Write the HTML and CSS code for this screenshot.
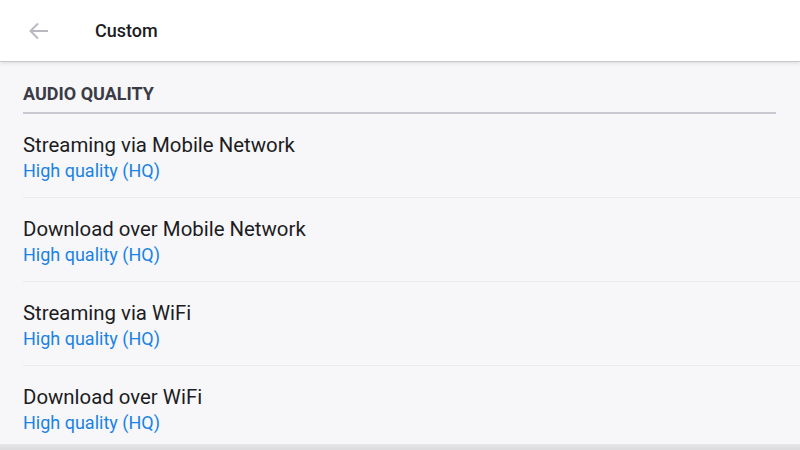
FILE: index.html
```html
<!DOCTYPE html>
<html>
<head>
    <title>Custom</title>
    <meta name="viewport" content="width=device-width, initial-scale=1">
    <link rel="stylesheet" href="styles.css">
</head>
<body>
    <header class="topbar">
        <span class="back">
            <svg width="24" height="24" viewBox="0 0 24 24"><path d="M21 12H3.5M11 4.5L3.5 12l7.5 7.5" fill="none" stroke="#b9b9c4" stroke-width="2"/></svg>
        </span>
        <span class="title">Custom</span>
    </header>

    <main class="settings">
        <h2 class="group">AUDIO QUALITY</h2>
        <ul class="list">
            <li>
                <div class="name">Streaming via Mobile Network</div>
                <div class="value">High quality (HQ)</div>
            </li>
            <li>
                <div class="name">Download over Mobile Network</div>
                <div class="value">High quality (HQ)</div>
            </li>
            <li>
                <div class="name">Streaming via WiFi</div>
                <div class="value">High quality (HQ)</div>
            </li>
            <li>
                <div class="name">Download over WiFi</div>
                <div class="value">High quality (HQ)</div>
            </li>
        </ul>
    </main>
    <div class="bottom"></div>
</body>
</html>
```

FILE: styles.css
```css
body { font-family: Roboto, 'Noto Sans', sans-serif; margin: 0; background: #f7f7f9; height: 450px; overflow: hidden; display: flex; flex-direction: column; }
.topbar { height: 61px; background: #fff; display: flex; align-items: center; border-bottom: 1px solid #c9c9cc; box-shadow: 0 1px 4px rgba(0,0,0,0.12); position: relative; z-index: 1; }
.back { width: 24px; height: 24px; margin: 0 0 0 27px; display: flex; }
.title { margin-left: 44px; font-size: 18px; font-weight: 500; color: #1b1b22; }
.settings { padding: 0 0 0 23px; flex: 1; }
.group { margin: 0 24px 0 0; padding: 21px 0 0; height: 29px; font-size: 18px; font-weight: 700; color: #3b3b46; border-bottom: 2px solid #c9c9d1; line-height: 22px; }
.list { list-style: none; margin: 0; padding: 0; }
.list li { padding: 18px 0 13px; border-bottom: 1px solid #ebebee; }
.list li:last-child { border-bottom: none; padding-bottom: 7px; }
.name { font-size: 20.4px; line-height: 26px; color: #1c1c22; }
.value { font-size: 18px; line-height: 26px; color: #1a83e3; }
.bottom { height: 6px; background: linear-gradient(#e6e6e8, #dcdcde); }
```
